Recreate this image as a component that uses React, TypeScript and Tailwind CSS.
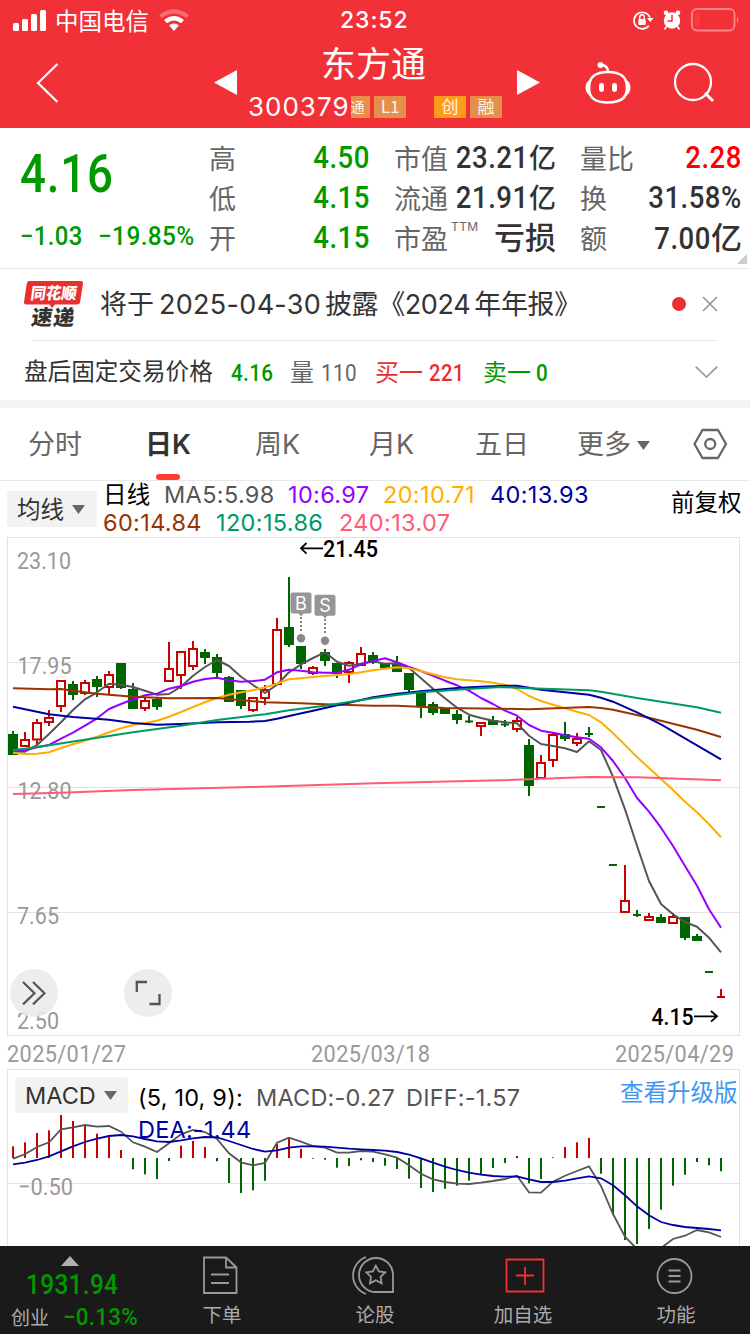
import type { ReactNode } from 'react';

type Candle = [top: number, bottom: number, high: number, low: number, up: 0 | 1];

// y positions inside the 750 x 1334 canvas: body top, body bottom, high, low, rising
const candles: Candle[] = [
  [734, 755, 731, 755, 0], [739, 747, 732, 747, 1], [722, 740.5, 719, 745, 1], [717, 723, 710, 726, 1],
  [680, 707, 680, 712, 1], [684, 695, 681, 700, 0], [682, 694, 680, 695, 1], [679, 687, 676, 697, 0],
  [674, 688, 671, 695, 1], [663, 688, 663, 689, 0], [689, 709, 683, 709, 0], [700, 709, 697, 711, 1],
  [699, 707, 698, 710, 0], [668, 682, 642, 682, 1], [651, 676, 651, 689, 1], [648, 667, 641, 670, 1],
  [652, 658, 649, 664, 0], [657, 673, 654, 677, 0], [677, 702, 676, 702, 0], [690, 706, 690, 709, 0],
  [697, 711, 697, 712, 1], [689, 699, 685, 705, 1], [629, 685, 618, 685, 1], [627, 645, 577, 647, 0],
  [646, 664, 646, 669, 0], [667, 674, 666, 675, 1], [652, 661, 649, 666, 0], [663, 674, 663, 678, 0],
  [662, 673, 661, 683, 1], [653, 666, 647, 666, 1], [655, 663, 652, 664, 0], [663, 668, 663, 668, 0],
  [664, 672, 656, 672, 0], [673, 690, 673, 693, 0], [693, 707, 690, 718, 0], [704, 713, 702, 715, 0],
  [708, 714, 708, 714, 0], [714, 720, 710, 724, 0], [720.5, 722.5, 716, 723, 0], [722, 727, 722, 736, 1],
  [720, 725, 716, 725, 0], [723.5, 725.5, 720, 727, 0], [720, 730, 717, 732, 1], [745, 786, 739, 796, 0],
  [762, 779, 755, 779, 1], [734, 761, 733, 767, 1], [734, 739, 722, 741, 0], [738, 744, 733, 746, 1],
  [733, 735, 727, 737, 0], [806, 808, 806, 808, 0], [864, 866, 864, 866, 0], [900, 913, 865, 913, 1],
  [914, 916, 910, 917, 0], [916, 921, 913, 921, 1], [917, 923, 914, 923, 0], [916, 924, 913, 924, 1],
  [917, 938, 917, 940, 0], [936, 941, 934, 941, 0], [971, 973, 971, 973, 0], [996, 998, 989, 998, 1],
];

const ma5 = [
  751.7, 751.7, 745, 734, 722.3, 710, 699.3, 692.3, 683.7, 684.7, 687, 690.7, 694.7, 694, 686.7, 675.7, 667, 660, 666, 676.7,
  685, 693, 684.7, 672.3, 664.3, 658, 652.3, 661.7, 665.7, 663.7, 661.3, 663.7, 663.3, 668, 678.3, 688.7, 698.3, 707.7, 714.7, 718,
  720.7, 722.3, 723.3, 735.7, 744, 746, 748.3, 752, 741.3, 750, 776.7, 809.3, 845.7, 881, 904, 914.3, 922, 926.7, 937.7, 952.3,
];

const ma10 = [
  751, 750.3, 747.3, 745, 738.7, 732.7, 725.7, 718.3, 709, 704, 699.3, 695.3, 693.7, 688.7, 686, 681.7, 679, 677.7, 680.3, 681.7,
  681, 679.7, 672.3, 669.7, 670.7, 672.3, 672.7, 672.7, 669.7, 664.3, 661, 658.3, 662.3, 667, 671, 675.7, 680.7, 685.3, 690.7, 698,
  704, 710.7, 715.7, 725, 730.7, 732.7, 735.3, 737.3, 738.7, 747.3, 761, 778, 798, 811.7, 827.7, 846, 866, 885.7, 909.3, 927.7,
];

const ma20 = [
  752.7, 754, 753.7, 752.3, 748, 744.3, 740.7, 736.7, 732.3, 728.3, 725, 723, 720.7, 716.7, 712, 707, 702.3, 698, 694.7, 692.3,
  690.3, 687.3, 683.7, 679.3, 678.3, 677, 676, 675, 674, 672.3, 670.3, 668.7, 667.3, 668.3, 671, 674.3, 677.3, 679.3, 680.3, 681.3,
  682.7, 685, 689, 696, 701, 704.7, 708.3, 711.7, 715, 722.3, 733.3, 745, 757, 768, 779, 790, 801.7, 812.3, 824.3, 837.3,
];

const slowLines = [
  { color: '#ff5a78', points: '13,794 61,792.7 133,790 250,787 375,783.3 500,780.3 589,777 637,777.3 721,780.3' },
  { color: '#993300', points: '13,688.3 49,689.3 61,689 73,690.7 97,693.7 133,696.7 169,698.3 217,698 250,701 265,702.3 301,703.3 325,704.3 373,705.7 397,705.7 445,708 500,708.7 529,709.3 589,707 601,708 613,709.7 649,717.7 697,729.7 721,737' },
  { color: '#0000a0', points: '13,706.7 49,714.3 73,717 109,719.7 133,723 157,724.7 181,724 217,722.3 250,721.7 265,721 277,718.7 289,716 313,710.7 337,705.3 349,702.7 373,697.3 397,693.7 421,691.3 457,688 481,686.7 505,685.8 517,685.7 541,689.7 565,692.3 589,694.7 601,697.7 613,701.7 637,712.3 661,724.3 685,738.3 721,759.3' },
  { color: '#009966', points: '13,750 25,748.7 49,745.3 133,732.3 181,725.7 217,720 250,716 265,714.3 289,710.3 325,705.7 349,702 373,698.3 397,695 421,692.3 457,689.7 500,687 529,688.3 589,690.3 601,691.7 637,698 697,707.3 721,712.7' },
];

const macdBars = [
  1146.3, 1142.3, 1133, 1130.3, 1115, 1121, 1125.7, 1133.7, 1137, 1150, 1169.3, 1174.3, 1179, 1161, 1145.7, 1141, 1147, 1161.3, 1183, 1193,
  1190.3, 1180.7, 1144, 1138.3, 1148.7, 1158.7, 1159.7, 1167.7, 1166, 1160.3, 1162, 1165.7, 1169, 1178.7, 1188, 1192, 1188.7, 1185.7, 1180.7, 1174,
  1168, 1163, 1156, 1183.3, 1179, 1157.3, 1147, 1142.3, 1138, 1173.7, 1214.3, 1240, 1244, 1229, 1209.7, 1185.7, 1174.7, 1162, 1165.3, 1171.3,
];

const diff = [
  1158.7, 1154.3, 1147, 1142.3, 1129.3, 1127.3, 1125, 1126.7, 1126, 1131.7, 1142.3, 1146.7, 1152, 1143.3, 1134.3, 1130, 1132, 1139, 1153.3, 1162.3,
  1165.3, 1163, 1142.7, 1137.7, 1141.7, 1146, 1147.7, 1152.7, 1152.7, 1151, 1151.7, 1154.3, 1157.7, 1165.3, 1173.7, 1179.3, 1182, 1183.7, 1184, 1182.7,
  1181, 1179, 1175.7, 1192.3, 1192.7, 1181.7, 1175.7, 1171, 1166.3, 1186, 1214, 1236.7, 1249, 1256, 1248, 1239, 1235.7, 1230, 1232.3, 1237,
];

const dea = [
  1164.3, 1162.7, 1160, 1156.3, 1151.3, 1146.3, 1142, 1138.7, 1136, 1135, 1136.3, 1139, 1141.3, 1142, 1140.3, 1138.3, 1137, 1137.3, 1141, 1145,
  1149, 1151.7, 1150.3, 1147.7, 1146.3, 1146.3, 1146.7, 1147.7, 1148.7, 1149.3, 1150, 1150.7, 1152, 1154.7, 1158.3, 1162.7, 1166.7, 1170, 1172.7, 1174.7,
  1176, 1176.7, 1176.3, 1179.3, 1182, 1182, 1180.7, 1178.3, 1176.3, 1178.3, 1185.3, 1195.3, 1206.3, 1215.3, 1222, 1225, 1227, 1228, 1229, 1230.3,
];

const toPoints = (values: number[]) => values.map((y, i) => `${13 + i * 12},${y}`).join(' ');

const numFont = "font-['Roboto','Noto_Sans_CJK_SC',sans-serif]";
const cjkFont = "font-['Noto_Sans_CJK_SC',sans-serif]";

function StatusBar() {
  return (
    <div className="grid h-10 grid-cols-[55px_104px_181px_292px_1fr] items-center text-white">
      <svg className="ml-[13px] h-[21px] w-[33px]" viewBox="0 0 33 21" fill="currentColor">
        <rect x="0" y="13" width="6" height="8" rx="1.5" />
        <rect x="9" y="9" width="6" height="12" rx="1.5" />
        <rect x="18" y="4" width="6" height="17" rx="1.5" />
        <rect x="27" y="0" width="6" height="21" rx="1.5" />
      </svg>
      <span className={`${cjkFont} whitespace-nowrap text-[23.5px] leading-[38px]`}>中国电信</span>
      <svg className="h-[22px] w-[30px]" viewBox="0 0 30 22">
        <path d="M0 6 Q15 -5.5 30 6 L27 9 Q15 0 3 9 Z" fill="#fff" opacity="0.3" />
        <path d="M5 11 Q15 3 25 11 L22 14.3 Q15 8.5 8 14.3 Z" fill="#fff" />
        <path d="M10 16.3 Q15 12.5 20 16.3 L15 22 Z" fill="#fff" />
      </svg>
      <span className="font-['Inter',sans-serif] text-[23px] font-medium leading-10 tracking-[0.9px]">23:52</span>
      <div className="flex items-center">
        <svg className="h-[22px] w-[22px]" viewBox="0 0 22 22" fill="none" stroke="#fff" strokeWidth="1.7">
          <path d="M16.8 16.8 A8.3 8.3 0 1 1 18 8.5" />
          <path d="M15 9 H21.5 L18.2 13 Z" fill="#fff" stroke="none" />
          <rect x="6.3" y="10" width="7.4" height="6" rx="1" fill="#fff" stroke="none" />
          <path d="M7.8 10 V8 A2.2 2.2 0 0 1 12.2 8 V10" strokeWidth="1.4" />
        </svg>
        <svg className="ml-[9px] h-[20px] w-[18px]" viewBox="0 0 18 20">
          <circle cx="9" cy="10.5" r="8.2" fill="#fff" />
          <circle cx="3" cy="2.7" r="2.3" fill="#fff" />
          <circle cx="15" cy="2.7" r="2.3" fill="#fff" />
          <path d="M3.5 16.5 L1.5 19.5 M14.5 16.5 L16.5 19.5" stroke="#fff" strokeWidth="1.6" />
          <path d="M9 5 V11 H4.5" fill="none" stroke="#f23037" strokeWidth="1.5" />
        </svg>
        <svg className="ml-[10px] h-[24px] w-[50px]" viewBox="0 0 50 24">
          <rect x="1" y="1" width="42.5" height="21.5" rx="5" fill="none" stroke="#fff" strokeOpacity="0.42" strokeWidth="1.8" />
          <rect x="4" y="4" width="5" height="14.5" rx="2" fill="#ff3b30" />
          <path d="M46 8 Q48.5 11.8 46 15.5 Z" fill="#fff" opacity="0.45" />
        </svg>
      </div>
    </div>
  );
}

function Tag({ className, children }: { className: string; children: ReactNode }) {
  return (
    <span className={`${cjkFont} flex h-[22px] justify-center text-[17px] leading-[20px] text-white/90 ${className}`}>
      {children}
    </span>
  );
}

function TitleBar() {
  return (
    <div className="grid h-[88px] grid-cols-[214px_24px_279px_24px_44px_89px_1fr] text-white">
      <svg className="ml-9 mt-[22px] h-[42px] w-6" viewBox="0 0 24 42" fill="none" stroke="currentColor" strokeWidth="2.2">
        <path d="M21.5 2 L2 21 L21.5 40" />
      </svg>
      <svg className="mt-[30px] h-[25px] w-6" viewBox="0 0 24 25" fill="currentColor">
        <path d="M0 12.5 L23 0 V25 Z" />
      </svg>
      <div>
        <div className={`${cjkFont} ml-[83px] h-[56px] whitespace-nowrap text-[35px] leading-[43px]`}>东方通</div>
        <div className="ml-[10px] flex h-[22px] items-center">
          <span className="w-[103px] font-['Inter',sans-serif] text-[26px] leading-[22px] tracking-[1px]">300379</span>
          <Tag className="w-[19px] bg-[#e58f4b]"><span className="mr-[6px] text-[14px]">通</span></Tag>
          <Tag className="ml-1 w-8 bg-[#e58f4b]">L1</Tag>
          <Tag className="ml-7 w-8 bg-[#ff9b1a]">创</Tag>
          <Tag className="ml-1 w-8 bg-[#e58f4b]">融</Tag>
        </div>
      </div>
      <svg className="mt-[30px] h-[25px] w-6" viewBox="0 0 24 25" fill="currentColor">
        <path d="M23 12.5 L0 0 V25 Z" />
      </svg>
      <span />
      <svg className="mt-[21px] h-[44px] w-[47px]" viewBox="0 0 47 44" fill="none" stroke="currentColor" strokeWidth="2.6">
        <path d="M23 11 C36 11 42 16 42 27 C42 37 36 41.5 23 41.5 C10 41.5 4 37 4 27 C4 16 10 11 23 11 Z" />
        <path d="M4 20.5 C0.5 23 0.5 30 4 33 Z M42 20.5 C45.5 23 45.5 30 42 33 Z" fill="currentColor" strokeWidth="1.6" />
        <path d="M15 4 C20 3.5 23 6 23 11" />
        <circle cx="15.5" cy="4" r="3" fill="currentColor" stroke="none" />
        <rect x="14" y="22" width="5" height="9" rx="2.4" fill="currentColor" stroke="none" />
        <rect x="27" y="22" width="5" height="9" rx="2.4" fill="currentColor" stroke="none" />
      </svg>
      <svg className="mt-[22px] h-[42px] w-[42px]" viewBox="0 0 42 42" fill="none" stroke="currentColor" strokeWidth="2.3">
        <circle cx="19" cy="20" r="18" />
        <path d="M31 31 L39 39" strokeWidth="2.8" />
      </svg>
    </div>
  );
}

// condensed figures, anchored to their right edge
function Digits({ children }: { children: ReactNode }) {
  return (
    <span className="-ml-6 inline-block origin-right scale-x-[0.86] text-[32px] leading-none tracking-[0.6px]">
      {children}
    </span>
  );
}

function Quote() {
  return (
    <div className="flex h-[141px] border-b border-[#e8e8e8] text-[27px] text-[#333]">
      <div className={`${numFont} w-[209px] whitespace-nowrap pl-5 font-medium text-[#009900]`}>
        <div className="h-[88px] origin-left scale-x-[0.86] text-[53px] leading-[92px] tracking-[1px]">4.16</div>
        <div className="flex text-[26px] leading-[40px] tracking-[0.4px]">
          <span className="w-[78px] origin-left scale-x-[0.92]">−1.03</span>
          <span className="origin-left scale-x-[0.94]">−19.85%</span>
        </div>
      </div>
      <div className={`${cjkFont} w-[60px] pt-[10px] leading-10 text-[#666]`}>
        <div>高</div>
        <div>低</div>
        <div>开</div>
      </div>
      <div className={`${numFont} w-[101px] pt-[11px] text-right font-medium leading-10 text-[#009900]`}>
        <div className="h-10"><Digits>4.50</Digits></div>
        <div className="h-10"><Digits>4.15</Digits></div>
        <div className="h-10"><Digits>4.15</Digits></div>
      </div>
      <div className={`${cjkFont} ml-6 w-[87px] pt-[10px] leading-10 text-[#666]`}>
        <div>市值</div>
        <div>流通</div>
        <div className="flex">
          市盈
          <span className="ml-[3px] font-['Inter',sans-serif] text-[12px] leading-[17px] tracking-[0.4px]">TTM</span>
        </div>
      </div>
      <div className={`${numFont} -ml-6 w-[99px] whitespace-nowrap pt-[11px] text-right font-medium leading-10`}>
        <div className="h-10"><Digits>23.21</Digits>亿</div>
        <div className="h-10"><Digits>21.91</Digits>亿</div>
        <div className="h-10 text-[31px]">亏损</div>
      </div>
      <div className={`${cjkFont} ml-6 w-[55px] pt-[10px] leading-10 text-[#666]`}>
        <div>量比</div>
        <div>换</div>
        <div>额</div>
      </div>
      <div className={`${numFont} w-[107px] whitespace-nowrap pt-[11px] text-right font-medium leading-10`}>
        <div className="h-10 text-[#ff0000]"><Digits>2.28</Digits></div>
        <div className="h-10"><Digits>31.58%</Digits></div>
        <div className="h-10 text-[31px]"><Digits>7.00</Digits>亿</div>
      </div>
      <svg className="-ml-[5px] mt-[126px] h-[10px] w-[10px]" viewBox="0 0 10 10">
        <path d="M10 0 V10 H0 Z" fill="#ccc" />
      </svg>
    </div>
  );
}

function News() {
  return (
    <div className="border-b-8 border-[#f4f4f4]">
      <div className="flex h-[71px] items-center">
        <svg className="ml-6 h-[50px] w-[60px]" viewBox="0 0 60 50">
          <path d="M5 1 H57 Q59.5 1 59 3.5 L56 22.5 Q55.6 24.5 53 24.5 H31 L28 28 L25.5 24.5 H2 Q-0.3 24.5 0 22 L2.8 3.5 Q3.2 1 5 1 Z" fill="#e93030" />
          <text transform="translate(6 18.5) skewX(-8)" textLength="46" lengthAdjust="spacingAndGlyphs" fontFamily="Noto Sans CJK SC" fontWeight="900" fontSize="16" fill="#fff">同花顺</text>
          <text transform="translate(6.5 45) skewX(-8)" textLength="43" fontFamily="Noto Sans CJK SC" fontWeight="900" fontSize="21" fill="#333">速递</text>
        </svg>
        <div className="ml-4 flex w-[571px] whitespace-nowrap font-['Inter','Noto_Sans_CJK_SC',sans-serif] text-[27px] leading-[40px] text-[#333]">
          <span className="w-[59px]">将于</span>
          <span className="w-[166px] tracking-[0.3px]">2025-04-30</span>
          <span className="tracking-[-0.4px]">披露《2024</span>
          <span className="ml-[4px] tracking-[-0.3px]">年年报》</span>
        </div>
        <span className="mb-[2px] ml-[1px] h-[14px] w-[14px] rounded-full bg-[#e93030]" />
        <svg className="mb-[2px] ml-4 h-4 w-4" viewBox="0 0 16 16" stroke="#999" strokeWidth="1.7">
          <path d="M1 1 L15 15 M15 1 L1 15" />
        </svg>
      </div>
      <div className="ml-8 mr-8 border-t border-[#e8e8e8]" />
      <div className={`${numFont} flex h-[59px] items-center whitespace-nowrap pt-[4px] text-[24px] leading-none text-[#333]`}>
        <span className="ml-[24px] w-[207px] pt-px text-[23.6px]">盘后固定交易价格</span>
        <span className="w-[59px] origin-left scale-x-[0.86] font-medium tracking-[0.4px] text-[#009900]">4.16</span>
        <span className="w-[31px] text-[#666]">量</span>
        <span className="w-[54px] origin-left scale-x-[0.86] tracking-[0.5px] text-[#666]">110</span>
        <span className="w-[54px] text-[#e93030]">买一</span>
        <span className="w-[54px] origin-left scale-x-[0.84] font-medium tracking-[0.5px] text-[#e93030]">221</span>
        <span className="w-[53px] text-[#009900]">卖一</span>
        <span className="w-[159px] origin-left scale-x-[0.86] font-medium text-[#009900]">0</span>
        <svg className="mb-[2px] h-[12px] w-[23px]" viewBox="0 0 23 12" fill="none" stroke="#999" strokeWidth="1.7">
          <path d="M0.7 0.7 L11.5 11 L22.3 0.7" />
        </svg>
      </div>
    </div>
  );
}

function Tabs() {
  return (
    <div className="grid h-[73px] grid-cols-[119px_137px_113px_107px_101px_116px_1fr] border-b border-[#e8e8e8] font-['Inter','Noto_Sans_CJK_SC',sans-serif] text-[27px] leading-[74px] text-[#666]">
      <span className="pl-[28px]">分时</span>
      <div className="pl-[28px] font-semibold text-[#333]">
        <div className="-ml-[2px] h-[66px]">日K</div>
        <div className="ml-[9px] h-[6px] w-6 rounded-full bg-[#ff3b30]" />
      </div>
      <span className="-ml-px">周K</span>
      <span>月K</span>
      <span className="-ml-px">五日</span>
      <div className="flex items-center">
        更多
        <svg className="ml-[6px] h-[9px] w-[13px]" viewBox="0 0 13 9" fill="#666">
          <path d="M0 0 H13 L6.5 9 Z" />
        </svg>
      </div>
      <svg className="mt-[20px] h-[32px] w-[35px]" viewBox="0 0 35 32" fill="none" stroke="#666" strokeWidth="2.3">
        <path d="M9.5 2 H25 L33 16 L25 30 H9.5 L1.5 16 Z" strokeLinejoin="round" />
        <circle cx="17.2" cy="16" r="5" />
      </svg>
    </div>
  );
}

function DropButton({ className, children }: { className: string; children: ReactNode }) {
  return (
    <button className={`flex h-9 items-center rounded bg-[#f2f2f2] pl-[10px] text-left leading-[37px] text-[#333] ${className}`}>
      {children}
      <svg className="ml-[8px] h-[9px] w-[13px]" viewBox="0 0 13 9" fill="#666">
        <path d="M0 0 H13 L6.5 9 Z" />
      </svg>
    </button>
  );
}

function MaLegend() {
  return (
    <div className="flex h-[56px] whitespace-nowrap pl-[7px] font-['Inter','Noto_Sans_CJK_SC',sans-serif] text-[23.5px]">
      <DropButton className="mt-[10px] w-[90px]">均线</DropButton>
      <div className="ml-[6px] w-[568px] leading-7 tracking-[0.35px]">
        <div className="flex h-7">
          <span className="w-[61px] text-black">日线</span>
          <span className="w-[124px] text-[#555]">MA5:5.98</span>
          <span className="w-[95px] text-[#9600ff]">10:6.97</span>
          <span className="w-[107px] text-[#ffae00]">20:10.71</span>
          <span className="text-[#0000a0]">40:13.93</span>
        </div>
        <div className="flex h-7">
          <span className="w-[113px] text-[#993300]">60:14.84</span>
          <span className="w-[123px] text-[#009966]">120:15.86</span>
          <span className="text-[#ff5a78]">240:13.07</span>
        </div>
      </div>
      <span className="leading-[43px] text-black">前复权</span>
    </div>
  );
}

function KLineChart() {
  return (
    <div className="relative h-[500px]">
      <svg className="block h-[500px] w-[750px] overflow-visible" viewBox="0 537 750 500" fontFamily="Roboto">
        <g stroke="#e2e2e2" fill="none">
          <rect x="7.5" y="537.5" width="732" height="498" />
          <path d="M8 662.5 H739 M8 787.5 H739 M8 912.5 H739" />
        </g>

        {/* axis labels */}
        <g fill="#999" fontSize="24">
          <text x="17" y="569" textLength="54" lengthAdjust="spacingAndGlyphs">23.10</text>
          <text x="17.5" y="674" textLength="54" lengthAdjust="spacingAndGlyphs">17.95</text>
          <text x="17.5" y="799" textLength="54" lengthAdjust="spacingAndGlyphs">12.80</text>
          <text x="17" y="924" textLength="42" lengthAdjust="spacingAndGlyphs">7.65</text>
          <text x="17" y="1029" textLength="42" lengthAdjust="spacingAndGlyphs">2.50</text>
        </g>

        {candles.map(([top, bottom, high, low, up], i) => {
          const x = 13 + i * 12;
          const color = up ? '#c80000' : '#006400';
          const thin = bottom - top <= 2;
          return (
            <g key={i} fill={color}>
              <rect x={x - 1} y={high} width="2" height={up ? top - high : low - high} />
              {up === 1 && <rect x={x - 1} y={bottom} width="2" height={low - bottom} />}
              {thin || !up ? (
                <rect x={thin ? x - 4 : x - 5} y={top} width={thin ? 8 : 10} height={bottom - top} />
              ) : (
                <rect x={x - 4} y={top + 1} width="8" height={bottom - top - 2} fill="none" stroke={color} strokeWidth="2" />
              )}
            </g>
          );
        })}
        <g fill="none" strokeWidth="2" strokeLinejoin="round">
          <polyline points={toPoints(ma5)} stroke="#555" />
          <polyline points={toPoints(ma10)} stroke="#9600ff" />
          <polyline points={toPoints(ma20)} stroke="#ffae00" />
          {slowLines.map((line) => (
            <polyline key={line.color} points={line.points} stroke={line.color} />
          ))}
        </g>

        {/* high / low of the visible range */}
        <g fill="#000" fontSize="23.5" fontWeight="500">
          <text x="323" y="557" textLength="55" lengthAdjust="spacingAndGlyphs">21.45</text>
          <text x="651.5" y="1025" textLength="42" lengthAdjust="spacingAndGlyphs">4.15</text>
        </g>
        <g stroke="#000" strokeWidth="1.8" fill="none">
          <path d="M323 548.3 H301 M306.5 543 L301 548.3 L306.5 553.6" />
          <path d="M694 1016.3 H717 M711 1011 L717 1016.3 L711 1021.6" />
        </g>

        {/* trade marks */}
        <g fill="#969696">
          <rect x="290.5" y="592.5" width="21" height="21" rx="2" />
          <path d="M298 613 H304 L301 616.5 Z" />
          <circle cx="301" cy="638.3" r="4.2" fill="#888" />
          <rect x="314.5" y="594.8" width="21" height="21" rx="2" />
          <path d="M322 615 H328 L325 618.5 Z" />
          <circle cx="325" cy="640.7" r="4.2" fill="#888" />
        </g>
        <path d="M301 617 V632 M325 619 V634" stroke="#777" strokeWidth="1.8" strokeDasharray="2 2" />
        <g fill="#fff" fontSize="18" fontFamily="Inter" textAnchor="middle">
          <text x="301" y="610">B</text>
          <text x="325" y="612.3">S</text>
        </g>
      </svg>
      <button className="absolute left-[10px] top-[432px] flex h-12 w-12 items-center justify-center rounded-full bg-[#ebebeb]/90">
        <svg className="h-[24px] w-[24px]" viewBox="0 0 24 24" fill="none" stroke="#555" strokeWidth="2.2">
          <path d="M1 1 L12.5 12.2 L1 23.4 M11 1 L22.5 12.2 L11 23.4" />
        </svg>
      </button>
      <button className="absolute left-[124px] top-[432px] flex h-12 w-12 items-center justify-center rounded-full bg-[#ebebeb]/90">
        <svg className="h-[26px] w-[26px]" viewBox="0 0 26 26" fill="none" stroke="#555" strokeWidth="2.3">
          <path d="M12 2 H1.8 V12 M14.5 24 H24.5 V14" />
        </svg>
      </button>
    </div>
  );
}

function DateAxis() {
  return (
    <div className="flex h-8 font-['Roboto',sans-serif] text-[24px] leading-[34px] tracking-[0.4px] text-[#999]">
      {['2025/01/27', '2025/03/18', '2025/04/29'].map((date) => (
        <div key={date} className="w-[304px] shrink-0 pl-[7px]">
          <span className="inline-block origin-left scale-x-[0.905]">{date}</span>
        </div>
      ))}
    </div>
  );
}

function MacdPanel() {
  return (
    <div className="relative h-[177px] overflow-hidden">
      <svg className="absolute left-0 top-0 h-[177px] w-[750px]" viewBox="0 1069 750 177">
        <path d="M7.5 1246 V1069.5 H739.5 V1246 M8 1183.5 H739" stroke="#e2e2e2" fill="none" />
        {macdBars.map((y, i) => (
          <rect key={i} x={12 + i * 12} y={Math.min(y, 1158)} width="2" height={Math.abs(y - 1158)} fill={y < 1158 ? '#c80000' : '#006400'} />
        ))}
        <polyline points={toPoints(diff)} stroke="#555" strokeWidth="1.8" fill="none" />
        <polyline points={toPoints(dea)} stroke="#0000a0" strokeWidth="1.8" fill="none" />
        <text x="18" y="1194.5" textLength="55" lengthAdjust="spacingAndGlyphs" fill="#999" fontSize="24" fontFamily="Roboto">−0.50</text>
      </svg>
      <div className="relative flex whitespace-nowrap pl-[15px] pt-2 font-['Inter','Noto_Sans_CJK_SC',sans-serif] text-[23.5px] leading-9">
        <DropButton className="w-[113px]">MACD</DropButton>
        <div className="ml-[10px] w-[482px] pt-[5px] leading-8 tracking-[0.2px]">
          <div className="flex">
            <span className="w-[118px] text-black">(5, 10, 9):</span>
            <span className="w-[150px] text-[#555]">MACD:-0.27</span>
            <span className="text-[#555]">DIFF:-1.57</span>
          </div>
          <div className="text-[#0000a0]">DEA:-1.44</div>
        </div>
        <span className="leading-[32px] text-[#3f96ef]">查看升级版</span>
      </div>
    </div>
  );
}

function NavItem({ label, labelClass, children }: { label: string; labelClass?: string; children: ReactNode }) {
  return (
    <div className="flex flex-col items-center">
      <svg className="mt-[9px] h-[40px] w-[42px] overflow-visible" viewBox="0 0 42 40" fill="none" stroke="#999" strokeWidth="1.8">
        {children}
      </svg>
      <span className={`${cjkFont} whitespace-nowrap text-[19.5px] leading-[37px] text-[#aaa] ${labelClass ?? ''}`}>{label}</span>
    </div>
  );
}

function BottomNav() {
  return (
    <div className="grid h-[88px] grid-cols-[144px_156px_150px_149px_151px] bg-[#1a1a1a]">
      <div className={`${numFont} font-medium text-[#009900]`}>
        <svg className="ml-[61px] mt-[10px] h-[10px] w-[18px]" viewBox="0 0 18 10" fill="#b0b0b0">
          <path d="M0 10 L9 0 L18 10 Z" />
        </svg>
        <div className="ml-[26px] origin-left scale-x-[0.87] text-[28px] leading-[38px] tracking-[0.4px]">1931.94</div>
        <div className="flex h-[26px] items-center pl-[11px] leading-none">
          <span className="w-[54px] pt-[2px] text-[19px] font-normal text-[#aaa]">创业</span>
          <span className="origin-left scale-x-[0.93] text-[24px] tracking-[0.3px]">−0.13%</span>
        </div>
      </div>
      <NavItem label="下单">
        <path d="M3 2.5 H25 L35.5 12.5 V38 H3 Z M25 2.5 V12.5 H35.5 M10 19.5 H28 M10 28 H28" />
      </NavItem>
      <NavItem label="论股">
        <path d="M39 37 H22 A17 17 0 1 1 39 20 Z" />
        <path d="M12 2 A19.7 19.7 0 0 0 12 39" />
        <path d="M24 13 L27 18.8 L33.4 19.8 L28.8 24.3 L29.8 30.7 L24 27.7 L18.2 30.7 L19.2 24.3 L14.6 19.8 L21 18.8 Z" transform="translate(-2.2 -2.4)" />
      </NavItem>
      <NavItem label="加自选" labelClass="-ml-[3px]">
        <path d="M2.5 4.5 H39.5 V36.5 H2.5 Z M21 12 V30 M12 20.5 H30" stroke="#f23037" />
      </NavItem>
      <NavItem label="功能" labelClass="ml-[3px]">
        <circle cx="20.5" cy="21" r="17" />
        <path d="M14.5 15.5 H26.5 M14.5 21 H26.5 M14.5 26.5 H26.5" />
      </NavItem>
    </div>
  );
}

export default function App() {
  return (
    <div className="h-[1334px] w-[750px] overflow-hidden bg-white">
      <header className="h-32 bg-[#f23037]">
        <StatusBar />
        <TitleBar />
      </header>
      <Quote />
      <News />
      <Tabs />
      <MaLegend />
      <KLineChart />
      <DateAxis />
      <MacdPanel />
      <BottomNav />
    </div>
  );
}
